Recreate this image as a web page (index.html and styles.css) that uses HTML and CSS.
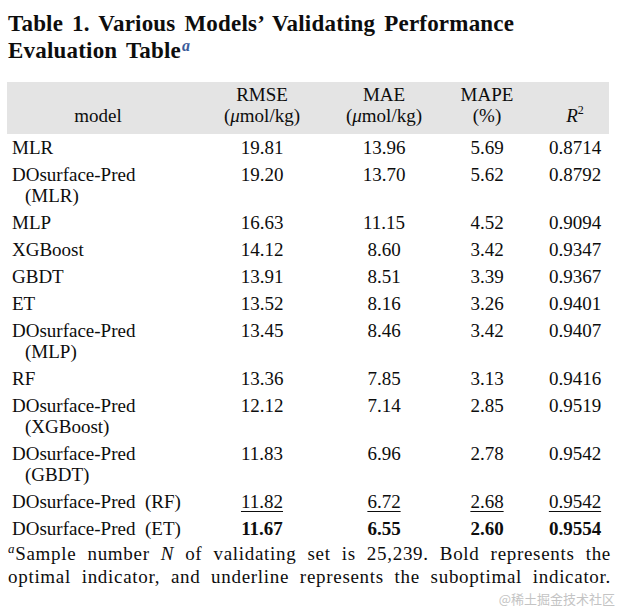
FILE: index.html
```html
<!DOCTYPE html>
<html>
<head>
<meta charset="utf-8">
<link rel="stylesheet" href="styles.css">
</head>
<body>
<div class="page">
  <h1 class="title">Table 1. Various Models’ Validating Performance<br>Evaluation Table<sup class="note-mark">a</sup></h1>
  <table class="perf">
    <colgroup>
      <col class="c-model"><col class="c-rmse"><col class="c-mae"><col class="c-mape"><col class="c-r2">
    </colgroup>
    <thead>
      <tr>
        <th>model</th>
        <th>RMSE<br>(<i>μ</i>mol/kg)</th>
        <th>MAE<br>(<i>μ</i>mol/kg)</th>
        <th>MAPE<br>(%)</th>
        <th><i>R</i><sup class="sq">2</sup></th>
      </tr>
    </thead>
    <tbody>
      <tr><td>MLR</td><td>19.81</td><td>13.96</td><td>5.69</td><td>0.8714</td></tr>
      <tr><td>DOsurface-Pred<span class="cont">(MLR)</span></td><td>19.20</td><td>13.70</td><td>5.62</td><td>0.8792</td></tr>
      <tr><td>MLP</td><td>16.63</td><td>11.15</td><td>4.52</td><td>0.9094</td></tr>
      <tr><td>XGBoost</td><td>14.12</td><td>8.60</td><td>3.42</td><td>0.9347</td></tr>
      <tr><td>GBDT</td><td>13.91</td><td>8.51</td><td>3.39</td><td>0.9367</td></tr>
      <tr><td>ET</td><td>13.52</td><td>8.16</td><td>3.26</td><td>0.9401</td></tr>
      <tr><td>DOsurface-Pred<span class="cont">(MLP)</span></td><td>13.45</td><td>8.46</td><td>3.42</td><td>0.9407</td></tr>
      <tr><td>RF</td><td>13.36</td><td>7.85</td><td>3.13</td><td>0.9416</td></tr>
      <tr><td>DOsurface-Pred<span class="cont">(XGBoost)</span></td><td>12.12</td><td>7.14</td><td>2.85</td><td>0.9519</td></tr>
      <tr><td>DOsurface-Pred<span class="cont">(GBDT)</span></td><td>11.83</td><td>6.96</td><td>2.78</td><td>0.9542</td></tr>
      <tr class="second"><td>DOsurface-Pred&nbsp; (RF)</td><td><u>11.82</u></td><td><u>6.72</u></td><td><u>2.68</u></td><td><u>0.9542</u></td></tr>
      <tr class="best"><td>DOsurface-Pred&nbsp; (ET)</td><td><b>11.67</b></td><td><b>6.55</b></td><td><b>2.60</b></td><td><b>0.9554</b></td></tr>
    </tbody>
  </table>
  <p class="footnote"><sup class="fn-mark">a</sup>Sample number <i>N</i> of validating set is 25,239. Bold represents the<br>optimal indicator, and underline represents the suboptimal indicator.</p>
  <div class="watermark">@稀土掘金技术社区</div>
</div>
</body>
</html>
```

FILE: styles.css
```css
html, body {
  margin: 0;
  padding: 0;
  background: #ffffff;
}

.page {
  position: relative;
  width: 622px;
  height: 610px;
  overflow: hidden;
  font-family: "Liberation Serif", "DejaVu Serif", serif;
  color: #0d0d0d;
}

.title {
  margin: 0;
  padding: 10px 0 0 8px;
  font-size: 23px;
  line-height: 27px;
  font-weight: bold;
  word-spacing: 3px;
  letter-spacing: 0.2px;
  color: #0d0d0d;
}

.note-mark {
  font-style: italic;
  color: #3b5b9a;
  font-size: 16px;
  line-height: 0;
  vertical-align: 7px;
  margin-left: 1px;
}

.perf {
  margin: 18px 0 0 7px;
  width: 602px;
  border-collapse: collapse;
  font-size: 19px;
  line-height: 21px;
  table-layout: fixed;
}

.c-model { width: 182px; }
.c-rmse { width: 146px; }
.c-mae { width: 98px; }
.c-mape { width: 108px; }
.c-r2 { width: 68px; }

.perf thead tr {
  background: #e4e4e4;
}

.perf th {
  font-weight: normal;
  text-align: center;
  vertical-align: bottom;
  padding: 2px 0 8px 0;
  white-space: nowrap;
}

.sq {
  font-size: 12px;
  line-height: 0;
  vertical-align: 8px;
}

.perf td {
  padding: 3px 0;
  vertical-align: top;
  text-align: center;
  white-space: nowrap;
}

.perf td:first-child {
  text-align: left;
  padding-left: 5px;
}

.cont {
  display: block;
  padding-left: 13px;
}

.perf u {
  text-decoration: underline;
  text-decoration-thickness: 1px;
  text-underline-offset: 3px;
}

.footnote {
  margin: 0;
  padding: 0 11px 0 8px;
  font-size: 19px;
  line-height: 23px;
  letter-spacing: 0.7px;
  text-align: justify;
  text-align-last: justify;
}

.fn-mark {
  font-style: italic;
  font-size: 13px;
  line-height: 0;
  vertical-align: 7px;
}

.watermark {
  position: absolute;
  right: 7px;
  bottom: 3px;
  font-family: "Noto Sans CJK SC", sans-serif;
  font-size: 13px;
  line-height: 16px;
  color: #c4c4c4;
}
```
